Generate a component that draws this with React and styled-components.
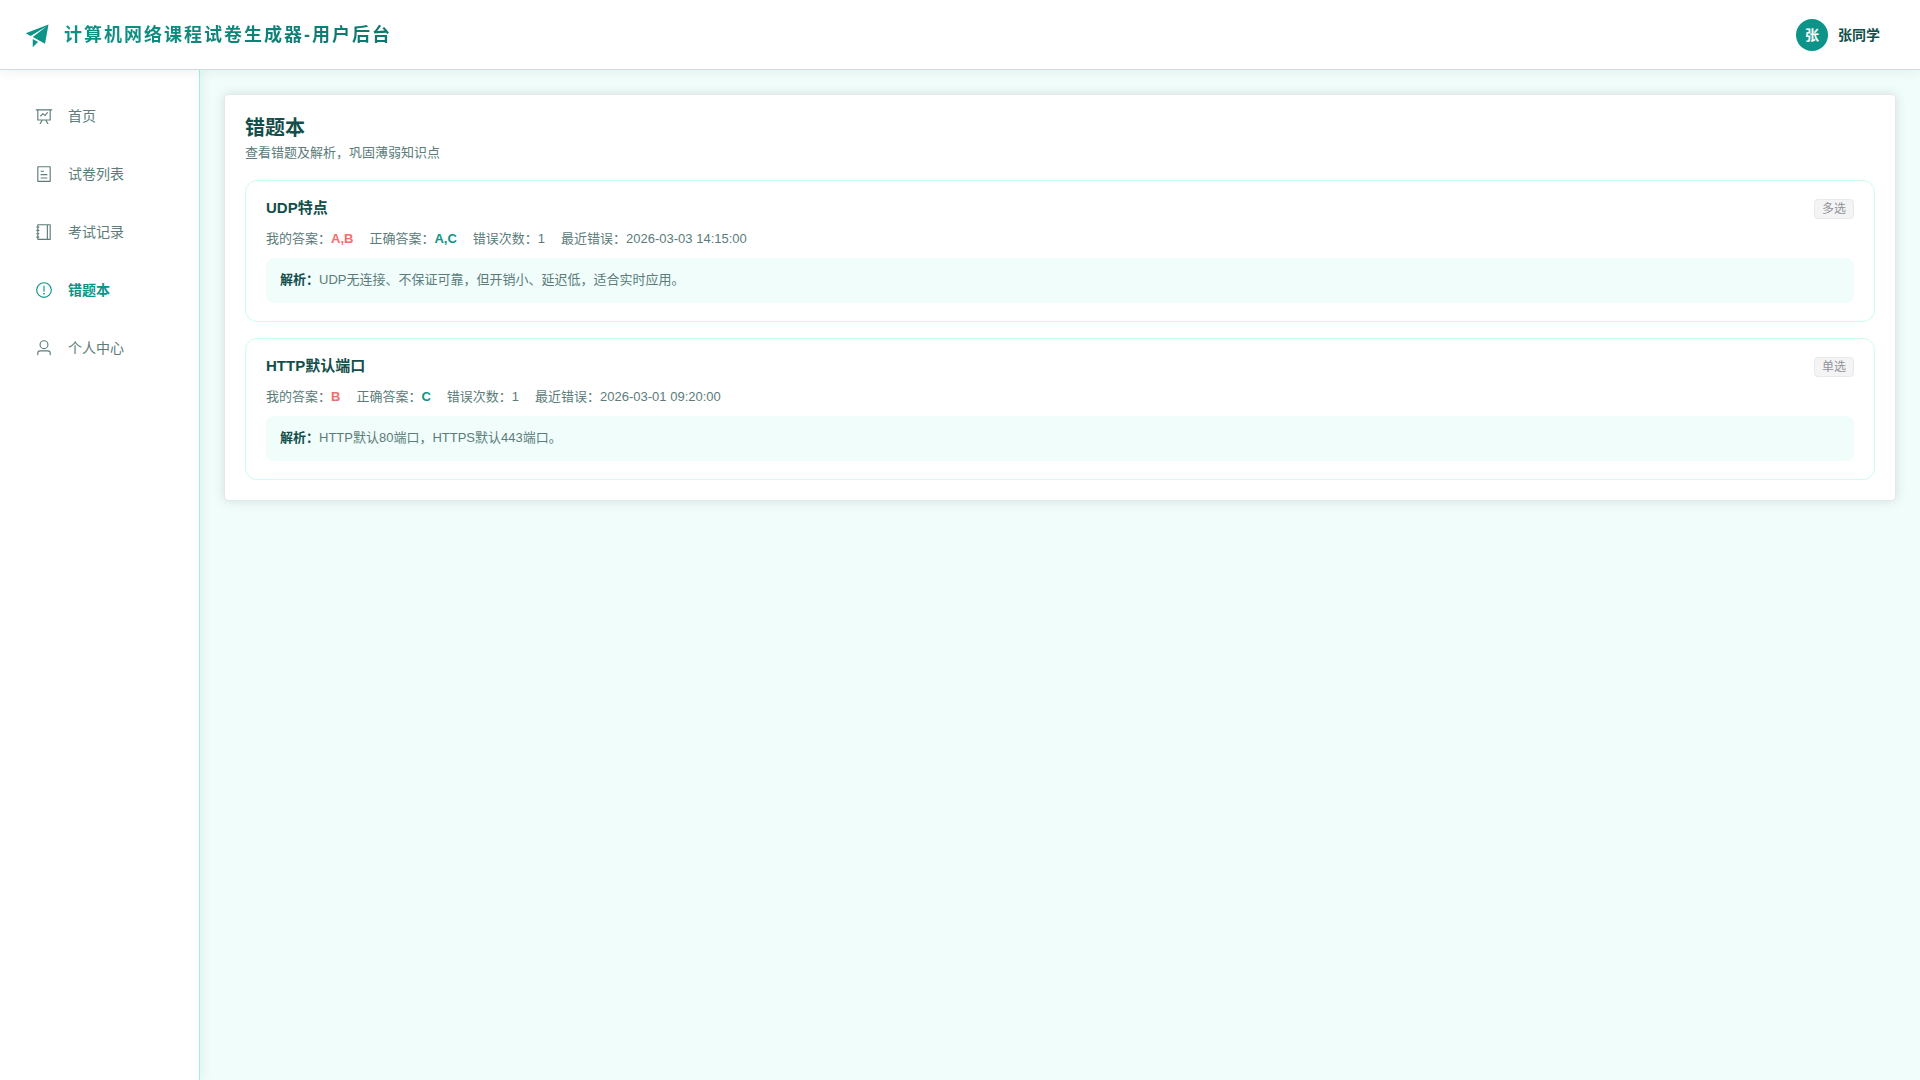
import React from 'react'
import styled, { createGlobalStyle } from 'styled-components'

const menus = [
    {
        label: '首页',
        href: '#home',
        path: 'M359.168 768H160a32 32 0 0 1-32-32V192H64a32 32 0 0 1 0-64h896a32 32 0 1 1 0 64h-64v544a32 32 0 0 1-32 32H665.216l110.848 192h-73.856L591.36 768H433.024L322.176 960H248.32zM832 192H192v512h640zM342.656 534.656a32 32 0 1 1-45.312-45.312L444.992 341.76l125.44 94.08L679.04 300.032a32 32 0 1 1 49.92 39.936L581.632 524.224 451.008 426.24 342.656 534.592z'
    },
    {
        label: '试卷列表',
        href: '#papers',
        path: 'M192 128v768h640V128zm-32-64h704a32 32 0 0 1 32 32v832a32 32 0 0 1-32 32H160a32 32 0 0 1-32-32V96a32 32 0 0 1 32-32m160 448h384v64H320zm0-192h192v64H320zm0 384h384v64H320z'
    },
    {
        label: '考试记录',
        href: '#records',
        path: 'M192 128v768h640V128zm-32-64h704a32 32 0 0 1 32 32v832a32 32 0 0 1-32 32H160a32 32 0 0 1-32-32V96a32 32 0 0 1 32-32M672 128h64v768h-64zM96 192h128q32 0 32 32t-32 32H96q-32 0-32-32t32-32m0 192h128q32 0 32 32t-32 32H96q-32 0-32-32t32-32m0 192h128q32 0 32 32t-32 32H96q-32 0-32-32t32-32m0 192h128q32 0 32 32t-32 32H96q-32 0-32-32t32-32'
    },
    {
        label: '错题本',
        href: '#wrong',
        active: true,
        path: 'M512 64a448 448 0 1 1 0 896 448 448 0 0 1 0-896m0 832a384 384 0 0 0 0-768 384 384 0 0 0 0 768m48-176a48 48 0 1 1-96 0 48 48 0 0 1 96 0m-48-464a32 32 0 0 1 32 32v288a32 32 0 0 1-64 0V288a32 32 0 0 1 32-32'
    },
    {
        label: '个人中心',
        href: '#profile',
        path: 'M512 512a192 192 0 1 0 0-384 192 192 0 0 0 0 384m0 64a256 256 0 1 1 0-512 256 256 0 0 1 0 512m320 320v-96a96 96 0 0 0-96-96H288a96 96 0 0 0-96 96v96a32 32 0 1 1-64 0v-96a160 160 0 0 1 160-160h448a160 160 0 0 1 160 160v96a32 32 0 1 1-64 0'
    }
]

const questions = [
    {
        title: 'UDP特点',
        type: '多选',
        mine: 'A,B',
        correct: 'A,C',
        count: 1,
        time: '2026-03-03 14:15:00',
        analysis: 'UDP无连接、不保证可靠，但开销小、延迟低，适合实时应用。'
    },
    {
        title: 'HTTP默认端口',
        type: '单选',
        mine: 'B',
        correct: 'C',
        count: 1,
        time: '2026-03-01 09:20:00',
        analysis: 'HTTP默认80端口，HTTPS默认443端口。'
    }
]

function Icon({ size, path }) {
    return (
        <svg width={size} height={size} viewBox="0 0 1024 1024" fill="currentColor" aria-hidden="true">
            <path d={path} />
        </svg>
    )
}

export default function App() {
    return (
        <>
            <GlobalStyle />
            <Layout>
                <Header>
                    <Brand>
                        <Icon size={28} path="m64 448 832-320-128 704-446.08-243.328L832 192 242.816 545.472zm256 512V657.024L512 768z" />
                        <BrandName>计算机网络课程试卷生成器-用户后台</BrandName>
                    </Brand>
                    <UserButton type="button">
                        <Avatar>张</Avatar>
                        <span>张同学</span>
                    </UserButton>
                </Header>
                <Body>
                    <Sidebar>
                        {menus.map(item => (
                            <MenuLink key={item.href} href={item.href} $active={item.active}>
                                <Icon size={18} path={item.path} />
                                <span>{item.label}</span>
                            </MenuLink>
                        ))}
                    </Sidebar>
                    <Main>
                        <Card>
                            <PageTitle>错题本</PageTitle>
                            <SubTitle>查看错题及解析，巩固薄弱知识点</SubTitle>
                            <QuestionList>
                                {questions.map(q => (
                                    <Question key={q.title}>
                                        <QuestionTop>
                                            <QuestionTitle>{q.title}</QuestionTitle>
                                            <Tag>{q.type}</Tag>
                                        </QuestionTop>
                                        <Meta>
                                            <span>我的答案：<Answer $wrong>{q.mine}</Answer></span>
                                            <span>正确答案：<Answer>{q.correct}</Answer></span>
                                            <span>错误次数：{q.count}</span>
                                            <span>最近错误：{q.time}</span>
                                        </Meta>
                                        <Analysis><strong>解析：</strong>{q.analysis}</Analysis>
                                    </Question>
                                ))}
                            </QuestionList>
                        </Card>
                    </Main>
                </Body>
            </Layout>
        </>
    )
}

const GlobalStyle = createGlobalStyle`
    * {
        box-sizing: border-box;
    }

    body {
        margin: 0;
        color: #134e4a;
        background: #f0fdfa;
        font-family: "Liberation Sans", "Noto Sans CJK SC", sans-serif;
        font-size: 14px;
        line-height: 20px;
    }
`

const Layout = styled.div`
    display: flex;
    flex-direction: column;
    min-height: 100vh;
`

const Header = styled.header`
    display: flex;
    align-items: center;
    justify-content: space-between;
    height: 70px;
    padding: 0 24px;
    background: #fff;
    border-bottom: 1px solid #99f6e4;
    box-shadow: 0 2px 12px rgba(0, 0, 0, 0.06);
    z-index: 2;
`

const Brand = styled.div`
    display: flex;
    align-items: center;
    gap: 12px;
    color: #0d9488;
`

const BrandName = styled.span`
    font-size: 18px;
    font-weight: 700;
    line-height: 24px;
    letter-spacing: 2px;
    background: linear-gradient(135deg, #0d9488, #0f766e);
    background-clip: text;
    -webkit-background-clip: text;
    color: transparent;
`

const UserButton = styled.button`
    display: flex;
    align-items: center;
    gap: 10px;
    padding: 6px 16px;
    border: 0;
    background: none;
    color: #134e4a;
    font-family: inherit;
    font-size: 14px;
    font-weight: 700;
    line-height: 20px;
    cursor: pointer;
`

const Avatar = styled.span`
    display: flex;
    align-items: center;
    justify-content: center;
    width: 32px;
    height: 32px;
    border-radius: 50%;
    background: #0d9488;
    color: #fff;
`

const Body = styled.div`
    display: flex;
    flex: 1;
`

const Sidebar = styled.nav`
    flex: 0 0 200px;
    display: flex;
    flex-direction: column;
    gap: 8px;
    padding: 21px 12px;
    background: #fff;
    border-right: 1px solid #99f6e4;
    box-shadow: 2px 0 12px rgba(0, 0, 0, 0.06);
`

const MenuLink = styled.a`
    display: flex;
    align-items: center;
    gap: 15px;
    height: 50px;
    padding: 0 23px;
    color: ${props => (props.$active ? '#0d9488' : '#5b7c7a')};
    font-weight: ${props => (props.$active ? 700 : 400)};
    text-decoration: none;
`

const Main = styled.main`
    flex: 1;
    min-width: 0;
    padding: 24px;
`

const Card = styled.section`
    padding: 20px;
    background: #fff;
    border: 1px solid #e4e7ed;
    border-radius: 4px;
    box-shadow: 0 0 12px rgba(0, 0, 0, 0.12);
`

const PageTitle = styled.h1`
    margin: 0;
    font-size: 20px;
    line-height: 26px;
`

const SubTitle = styled.p`
    margin: 2px 0 18px;
    color: #5b7c7a;
    font-size: 13px;
    line-height: 19px;
`

const QuestionList = styled.div`
    display: flex;
    flex-direction: column;
    gap: 16px;
`

const Question = styled.article`
    padding: 18px 20px;
    border: 1px solid #ccfbf1;
    border-radius: 12px;
`

const QuestionTop = styled.div`
    display: flex;
    align-items: flex-start;
    justify-content: space-between;
`

const QuestionTitle = styled.h2`
    margin: 0;
    font-size: 15px;
    line-height: 18px;
`

const Tag = styled.span`
    padding: 0 7px;
    border: 1px solid #e9e9eb;
    border-radius: 4px;
    background: #f4f4f5;
    color: #909399;
    font-size: 12px;
    line-height: 18px;
`

const Meta = styled.div`
    display: flex;
    flex-wrap: wrap;
    gap: 16px;
    margin: 10px 0;
    color: #5b7c7a;
    font-size: 13px;
    line-height: 19px;
`

const Answer = styled.b`
    color: ${props => (props.$wrong ? '#f56c6c' : '#0d9488')};
`

const Analysis = styled.p`
    margin: 0;
    padding: 12px 14px 14px;
    border-radius: 8px;
    background: #f0fdfa;
    color: #5b7c7a;
    font-size: 13px;
    line-height: 19px;

    strong {
        color: #134e4a;
    }
`
